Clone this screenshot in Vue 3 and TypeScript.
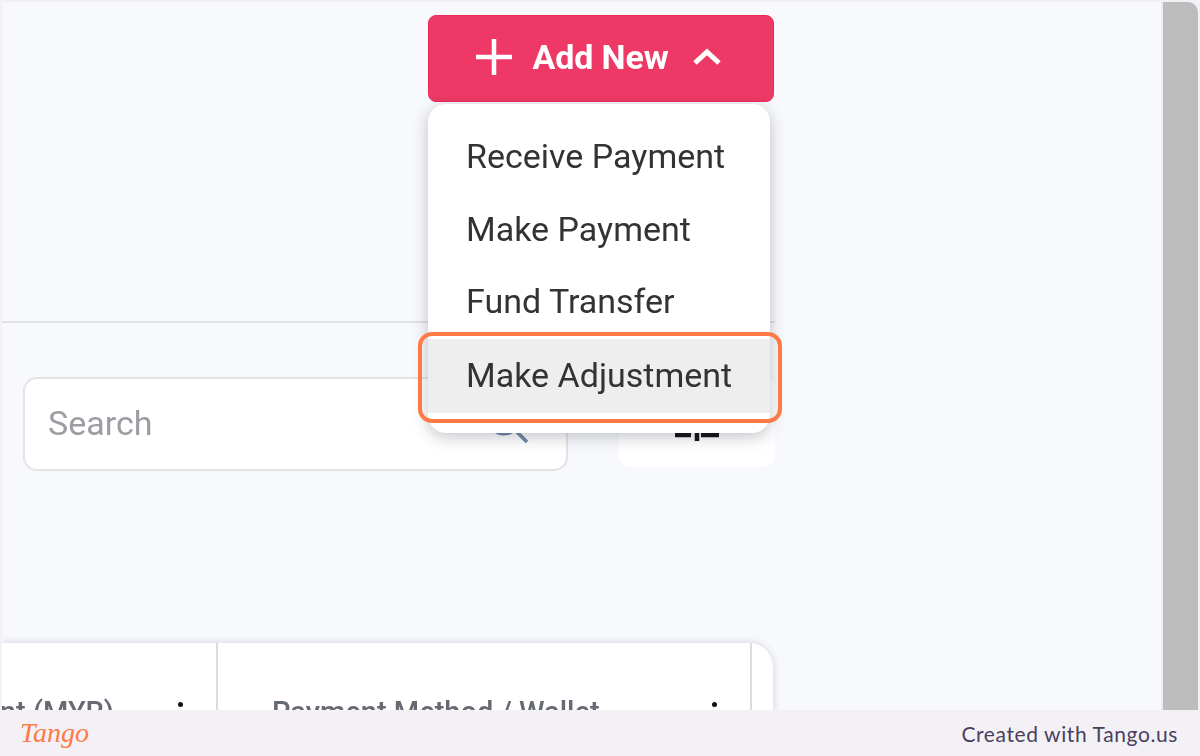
<script setup lang="ts">
const menuItems = ["Receive Payment", "Make Payment", "Fund Transfer", "Make Adjustment"];
const activeItem = "Make Adjustment";
</script>

<template>
  <div class="page">
    <div class="screen">
      <div class="content">
        <div class="toolbar">
          <button class="add-btn" type="button">
            <svg class="plus" width="38" height="38" viewBox="0 0 38 38">
              <path d="M19 1v36M1 19h36" stroke="#fff" stroke-width="4.5" fill="none" />
            </svg>
            <span class="add-label">Add New</span>
            <svg class="chevron" width="28" height="18" viewBox="0 0 28 18">
              <path d="M2 15 14 4l12 11" stroke="#fff" stroke-width="5" fill="none" />
            </svg>
          </button>

          <ul class="menu">
            <li
              v-for="item in menuItems"
              :key="item"
              class="menu-item"
              :class="{ active: item === activeItem }"
            >
              {{ item }}
            </li>
          </ul>
          <div class="highlight"></div>
        </div>

        <div class="filters">
          <div class="search">
            <span class="placeholder">Search</span>
            <svg class="search-icon" width="50" height="50" viewBox="0 0 50 50">
              <circle cx="24" cy="22" r="15" stroke="#6f86a8" stroke-width="3" fill="none" />
              <path d="M35 33 47 45" stroke="#6f86a8" stroke-width="3.5" fill="none" />
            </svg>
          </div>
          <div class="filter-btn">
            <svg width="46" height="50" viewBox="0 0 46 50">
              <path d="M1 38h16M27 38h18M23 26v18" stroke="#111" stroke-width="4.5" fill="none" />
            </svg>
          </div>
        </div>

        <div class="table">
          <div class="cell first">
            <span class="head-text cut">Amount (MYR)</span>
            <span class="kebab"></span>
          </div>
          <div class="cell second">
            <span class="head-text">Payment Method / Wallet</span>
            <span class="kebab"></span>
          </div>
          <div class="cell last"></div>
        </div>
      </div>
      <div class="scrollbar"></div>
    </div>

    <footer class="footer">
      <span class="logo">Tango</span>
      <span class="credit">Created with Tango.us</span>
    </footer>
  </div>
</template>

<style>
html,
body {
  margin: 0;
  background: #f3f1f6;
}
</style>

<style scoped>
.page {
  width: 1200px;
  height: 756px;
  overflow: hidden;
  display: flex;
  flex-direction: column;
  background: #f3f1f6;
  font-family: Roboto, "Liberation Sans", sans-serif;
}

.screen {
  height: 708px;
  margin: 2px 2px 0;
  display: flex;
  overflow: hidden;
  background: #f8f9fd;
  border-radius: 0 10px 0 0;
}

.content {
  flex: 1;
  min-width: 0;
}

.toolbar {
  position: relative;
  width: 773px;
  height: 321px;
  box-sizing: border-box;
  padding: 13px 1px 0 0;
  display: flex;
  justify-content: flex-end;
  align-items: flex-start;
  border-bottom: 2px solid #dfe0e3;
}

.add-btn {
  width: 346px;
  height: 87px;
  display: flex;
  align-items: center;
  justify-content: center;
  padding: 0 6px 4px 0;
  background: #ee3966;
  border: 1px solid #ea2a5c;
  border-radius: 8px;
  color: #fff;
  font-family: inherit;
  filter: blur(0.4px);
}

.plus {
  margin-right: 19px;
}

.add-label {
  font-size: 34px;
  font-weight: 700;
  letter-spacing: -0.1px;
}

.chevron {
  margin-left: 24px;
}

.menu {
  position: absolute;
  z-index: 2;
  top: 102px;
  left: 426px;
  width: 342px;
  height: 329px;
  box-sizing: border-box;
  margin: 0;
  padding: 16px 0 0;
  list-style: none;
  background: #fff;
  border-radius: 18px;
  box-shadow: 0 4px 16px rgba(40, 45, 60, 0.28);
}

.menu-item {
  height: 72.5px;
  line-height: 72.5px;
  padding-left: 38px;
  font-size: 34px;
  color: #333;
  white-space: nowrap;
  filter: blur(0.4px);
}

.menu-item.active {
  background: #eeeeee;
  height: 74px;
  margin-top: 1px;
}

.highlight {
  position: absolute;
  z-index: 3;
  top: 330px;
  left: 416px;
  width: 364px;
  height: 91px;
  box-sizing: border-box;
  border: 4px solid #ff7a45;
  border-radius: 14px;
}

.filters {
  width: 773px;
  box-sizing: border-box;
  padding: 54px 0 0 21px;
  display: flex;
  align-items: flex-start;
  gap: 51px;
  filter: blur(0.4px);
}

.search {
  position: relative;
  width: 545px;
  height: 94px;
  box-sizing: border-box;
  display: flex;
  align-items: center;
  padding: 0 0 2px 23px;
  background: #fff;
  border: 2px solid #e3e4e6;
  border-radius: 14px;
}

.placeholder {
  font-size: 34px;
  color: #9b9da3;
}

.search-icon {
  position: absolute;
  top: 18px;
  right: 36px;
}

.filter-btn {
  width: 156px;
  height: 90px;
  display: flex;
  align-items: center;
  justify-content: center;
  background: #fff;
  border-radius: 12px;
}

.table {
  width: 771px;
  height: 120px;
  margin-top: 172px;
  display: flex;
  background: #fff;
  border-radius: 0 24px 0 0;
  box-shadow: 0 0 8px rgba(40, 45, 60, 0.18);
}

.cell {
  position: relative;
  box-sizing: border-box;
  height: 100%;
  overflow: hidden;
  padding-top: 52px;
  white-space: nowrap;
  filter: blur(0.4px);
}

.first {
  width: 216px;
  border-right: 2px solid #dcdcdc;
  direction: rtl;
  padding-right: 102px;
}

.second {
  width: 534px;
  border-right: 2px solid #dcdcdc;
  padding-left: 54px;
}

.last {
  flex: 1;
}

.head-text {
  font-size: 29px;
  font-weight: 500;
  line-height: 34px;
  color: #666a72;
}

.cut {
  direction: ltr;
  display: inline-block;
}

.kebab {
  position: absolute;
  top: 59px;
  right: 33px;
  width: 5px;
  height: 5px;
  border-radius: 50%;
  background: #111;
}

.scrollbar {
  width: 37px;
  flex: none;
  box-sizing: border-box;
  background: #bdbdbd;
  border-left: 2px solid #eceded;
}

.footer {
  flex: 1;
  display: flex;
  align-items: center;
  justify-content: space-between;
  padding: 0 22px 0 20px;
  background: #f3f1f6;
}

.logo {
  font-family: "Liberation Serif", serif;
  font-style: italic;
  font-size: 28px;
  color: #ff7a45;
}

.credit {
  font-family: Lato, "Liberation Sans", sans-serif;
  font-size: 21px;
  letter-spacing: 0.6px;
  color: #4a3f5f;
}
</style>
